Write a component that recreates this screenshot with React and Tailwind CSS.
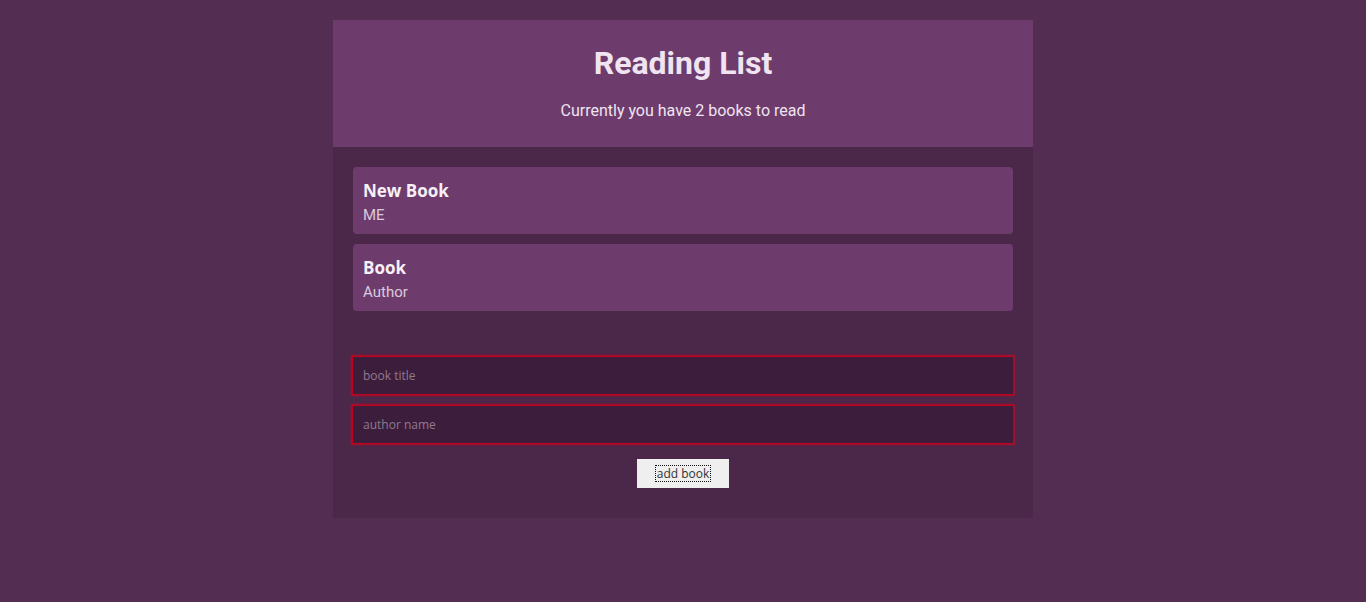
import { useState } from 'react'

const initialBooks = [
  { id: 1, title: 'New Book', author: 'ME' },
  { id: 2, title: 'Book', author: 'Author' },
]

function BookItem({ book }) {
  return (
    <li className="bg-[#6d3c6d] rounded-[4px] px-[10px] pt-[13px] pb-[9px]">
      <h3 className="text-[17px] leading-[22px] font-bold text-[#f7f0f7] font-['Open_Sans',sans-serif]">{book.title}</h3>
      <p className="mt-[3px] text-[15px] leading-[20px] text-[#dccadc]">{book.author}</p>
    </li>
  )
}

export default function App() {
  const [books] = useState(initialBooks)
  const [title, setTitle] = useState('')
  const [author, setAuthor] = useState('')

  return (
    <div className="min-h-screen bg-[#532e52] pt-[20px] font-['Roboto',sans-serif]">
      <div className="w-[700px] mx-auto bg-[#4b2849] pb-[30px]">
        <header className="bg-[#6d3c6d] h-[127px] flex flex-col items-center pt-[24px] text-[#f0e4f0]">
          <h1 className="text-[32px] leading-[38px] font-bold">Reading List</h1>
          <p className="mt-[19px] text-[16px] leading-[19px]">
            Currently you have {books.length} books to read
          </p>
        </header>

        <ul className="flex flex-col gap-[10px] px-[20px] pt-[20px]">
          {books.map((b) => (
            <BookItem key={b.id} book={b} />
          ))}
        </ul>

        <form
          className="mt-[45px] px-[19px] flex flex-col items-center"
          onSubmit={(e) => e.preventDefault()}
        >
          <input
            required
            value={title}
            onChange={(e) => setTitle(e.target.value)}
            placeholder="book title"
            className="w-full h-[39px] bg-[#3c1e3c] border border-[#c0001c] shadow-[0_0_1.5px_1px_rgba(214,0,30,0.75)] px-[10px] text-[12px] text-[#eee] font-['Open_Sans',sans-serif] placeholder:text-[#8f7a8f] outline-none"
          />
          <input
            required
            value={author}
            onChange={(e) => setAuthor(e.target.value)}
            placeholder="author name"
            className="mt-[10px] w-full h-[39px] bg-[#3c1e3c] border border-[#c0001c] shadow-[0_0_1.5px_1px_rgba(214,0,30,0.75)] px-[10px] text-[12px] text-[#eee] font-['Open_Sans',sans-serif] placeholder:text-[#8f7a8f] outline-none"
          />
          <button
            type="submit"
            className="mt-[15px] w-[92px] h-[29px] bg-[#efefef] flex items-center justify-center text-[12px] text-[#333] font-['Open_Sans',sans-serif]"
          >
            <span className="outline outline-1 outline-dotted outline-[#111] leading-[15px] px-[1px]">add book</span>
          </button>
        </form>
      </div>
    </div>
  )
}
